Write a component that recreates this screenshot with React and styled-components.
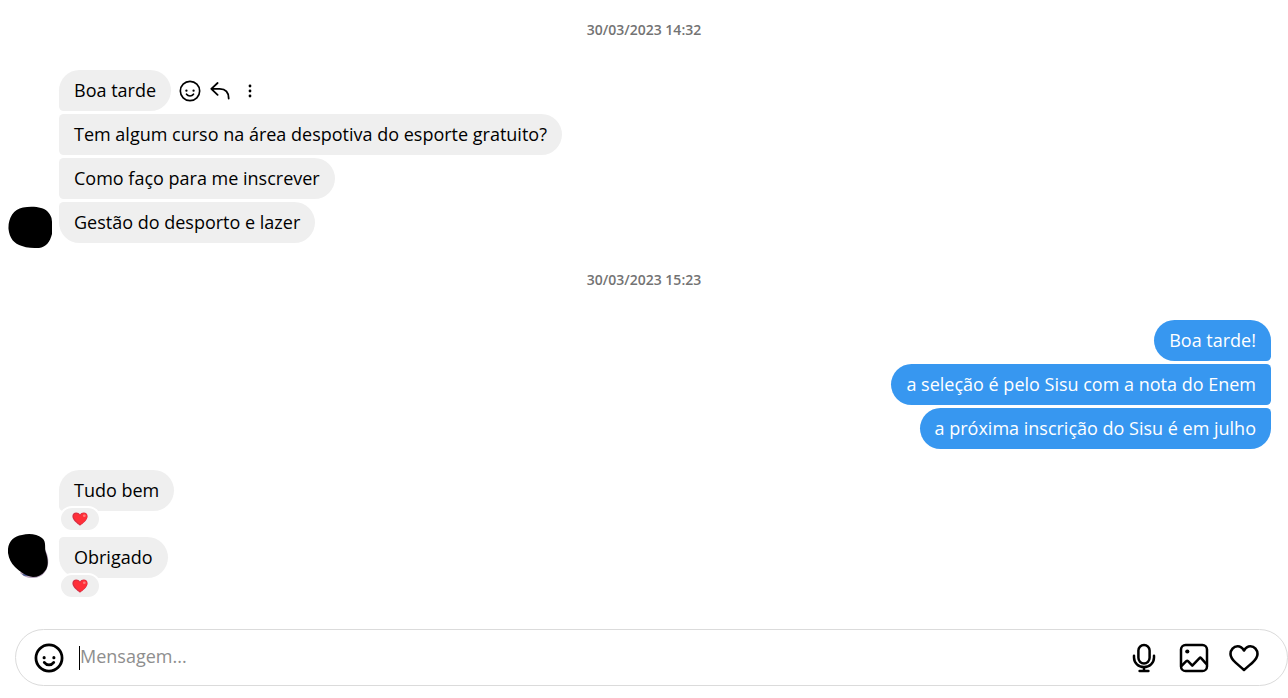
import React from "react";
import styled, { createGlobalStyle } from "styled-components";

const GlobalStyle = createGlobalStyle`
  *, *::before, *::after { box-sizing: border-box; }
  body {
    margin: 0;
    background: #fff;
    color: #000;
    font-family: "Segoe UI", "Open Sans", "Noto Sans", sans-serif;
  }
`;

const Page = styled.main`
  display: flex;
  flex-direction: column;
  min-height: 100vh;
`;

const Timestamp = styled.time`
  padding: 20px 0 30px;
  text-align: center;
  font-size: 14px;
  font-weight: 600;
  line-height: 20px;
  color: #737373;
`;

const Group = styled.section`
  display: flex;
  align-items: flex-end;
  justify-content: ${(p) => (p.$own ? "flex-end" : "flex-start")};
  padding: 0 17px ${(p) => p.$after}px 8px;
`;

const Avatar = styled.svg`
  flex: none;
  width: 44px;
  height: 46px;
  margin: 0 7px ${(p) => p.$lift}px 0;
`;

const Stack = styled.div`
  display: flex;
  flex-direction: column;
  align-items: ${(p) => (p.$own ? "flex-end" : "flex-start")};
  gap: 3px;
  padding-bottom: ${(p) => p.$below || 0}px;
`;

const Row = styled.div`
  display: flex;
  align-items: center;
`;

const corners = (own, first, last) => {
  const top = first ? 22 : 5;
  const bottom = last ? 22 : 5;
  return own ? `22px ${top}px ${bottom}px 22px` : `${top}px 22px 22px ${bottom}px`;
};

const Bubble = styled.p`
  margin: 0;
  padding: 8px 15px;
  font-size: 18px;
  line-height: 25px;
  border-radius: ${(p) => corners(p.$own, p.$first, p.$last)};
  background: ${(p) => (p.$own ? "#3797f0" : "#efefef")};
  color: ${(p) => (p.$own ? "#fff" : "#000")};
`;

const Reaction = styled.div`
  display: flex;
  align-items: center;
  justify-content: center;
  width: 42px;
  height: 26px;
  margin-top: -8px;
  margin-bottom: 2px;
  border: 2px solid #fff;
  border-radius: 14px;
  background: #efefef;
`;

const Actions = styled.div`
  display: flex;
  gap: 8px;
  margin-left: 8px;
`;

const IconButton = styled.button`
  display: flex;
  align-items: center;
  justify-content: center;
  padding: 0;
  border: 0;
  background: none;
  color: #000;
  width: ${(p) => p.$size}px;
  height: ${(p) => p.$size}px;
  cursor: pointer;
`;

const Composer = styled.form`
  display: flex;
  align-items: center;
  height: 57px;
  margin: auto 0 12px 15px;
  padding: 0 28px 0 18px;
  border: 1px solid #dbdbdb;
  border-radius: 29px;
`;

const Caret = styled.span`
  flex: none;
  width: 1px;
  height: 24px;
  margin-left: 15px;
  background: #000;
`;

const MessageInput = styled.input`
  flex: 1;
  min-width: 0;
  height: 40px;
  padding: 0 0 3px;
  border: 0;
  outline: 0;
  background: none;
  font: inherit;
  font-size: 18px;
  caret-color: transparent;
  &::placeholder { color: #8e8e8e; opacity: 1; }
`;

const Tools = styled.div`
  display: flex;
  gap: 20px;
`;

function Smiley({ size, stroke = 2 }) {
  return (
    <svg width={size} height={size} viewBox="0 0 24 24" fill="none" aria-hidden="true">
      <circle cx="12" cy="12" r={11 - stroke / 4} stroke="currentColor" strokeWidth={stroke} />
      <circle cx="8.1" cy="11.7" r="1.25" fill="currentColor" />
      <circle cx="15.9" cy="11.7" r="1.25" fill="currentColor" />
      <path d="M8.2 15.5c1.9 2.6 5.7 2.6 7.6 0" stroke="currentColor" strokeWidth={stroke} strokeLinecap="round" />
    </svg>
  );
}

function Reply() {
  return (
    <svg width="20" height="18" viewBox="0 0 20 18" fill="none" stroke="currentColor" strokeWidth="1.8" strokeLinecap="round" strokeLinejoin="round" aria-hidden="true">
      <path d="M7.6 1 1.3 6.8l6.3 6.1M1.3 6.8h8.4c5.5 0 9 3.4 9 9.7" />
    </svg>
  );
}

function More() {
  return (
    <svg width="4" height="14" viewBox="0 0 4 14" fill="currentColor" aria-hidden="true">
      <circle cx="2" cy="2" r="1.4" />
      <circle cx="2" cy="7" r="1.4" />
      <circle cx="2" cy="12" r="1.4" />
    </svg>
  );
}

function Mic() {
  return (
    <svg width="24" height="30" viewBox="0 0 24 30" fill="none" stroke="currentColor" strokeWidth="2.5" strokeLinecap="round" aria-hidden="true">
      <rect x="6.4" y="2" width="11.2" height="18.4" rx="5.6" />
      <path d="M2 12.8v1.7a10 9.6 0 0 0 20 0v-1.7M12 24v4M7.6 28h8.8" />
    </svg>
  );
}

function Picture() {
  return (
    <svg width="30" height="30" viewBox="0 0 30 30" fill="none" stroke="currentColor" strokeWidth="2.5" strokeLinejoin="round" aria-hidden="true">
      <rect x="2" y="2" width="26" height="26" rx="4.6" />
      <circle cx="8.3" cy="8.5" r="2.1" fill="currentColor" stroke="none" />
      <path d="m2.4 23 4.9-4.8c.6-.5 1.2-.5 1.7 0l4.3 4.5 7.2-7.6c.5-.5 1.1-.5 1.6 0l5.4 6" />
    </svg>
  );
}

function Heart() {
  return (
    <svg width="30" height="28" viewBox="0 0 30 28" fill="none" stroke="currentColor" strokeWidth="2.6" strokeLinejoin="round" aria-hidden="true">
      <path d="M21.4 2.3c-2.9 0-4.8 1.5-6.4 4.2-1.6-2.7-3.5-4.2-6.4-4.2C4.5 2.3 1.5 5.7 1.5 10c0 4.1 2.8 6.6 5.4 8.9 2.5 2.2 5.2 4.5 8.1 7.1 2.9-2.6 5.6-4.9 8.1-7.1 2.6-2.3 5.4-4.8 5.4-8.9 0-4.3-3-7.7-7.1-7.7Z" />
    </svg>
  );
}

function RedHeart() {
  return (
    <svg width="16" height="14" viewBox="0 0 16 14" role="img" aria-label="Amei">
      <path fill="#d62f45" d="M8 13.7C5.3 11.8.4 8.2.4 4.3.4 1.9 2 .4 4.2.4 6 .4 7.3 1.3 8 2.5 8.7 1.3 10 .4 11.8.4c2.2 0 3.8 1.5 3.8 3.9 0 3.9-4.9 7.5-7.6 9.4Z" />
      <path fill="#ff2f38" d="M8.6 12.5C6 10.7 1.7 7.7 1.7 4.3c0-1.7 1-2.9 2.7-2.9 1.7 0 2.9 1 3.7 2.7.8-1.7 2-3 3.7-3 2 0 3.3 1.3 3.3 3.2 0 3.4-3.9 6.5-6.5 8.2Z" />
      <ellipse cx="12.3" cy="3.7" rx="1.4" ry="1.2" fill="#ff7b79" />
    </svg>
  );
}

export default function App() {
  return (
    <Page>
      <GlobalStyle />
      <Timestamp>30/03/2023 14:32</Timestamp>
      <Group $after={2}>
        <Avatar $lift={0} viewBox="0 0 44 46" aria-hidden="true">
          <path d="M.5 27C0 17 5 7 15 5.5c6-1 13-1 18 .5 5 1 9 5 10.5 10 1 6 1 12 .5 16-2 8-6 13-13 14-6 0-12 0-17-2C6 42 1.5 36 .5 27Z" />
        </Avatar>
        <Stack $below={5}>
          <Row>
            <Bubble $first>Boa tarde</Bubble>
            <Actions>
              <IconButton $size={22} type="button" aria-label="Reagir"><Smiley size={22} stroke={1.8} /></IconButton>
              <IconButton $size={22} type="button" aria-label="Responder"><Reply /></IconButton>
              <IconButton $size={22} type="button" aria-label="Mais opções"><More /></IconButton>
            </Actions>
          </Row>
          <Bubble>Tem algum curso na área despotiva do esporte gratuito?</Bubble>
          <Bubble>Como faço para me inscrever</Bubble>
          <Bubble $last>Gestão do desporto e lazer</Bubble>
        </Stack>
      </Group>

      <Timestamp>30/03/2023 15:23</Timestamp>
      <Group $own $after={21}>
        <Stack $own>
          <Bubble $own $first>Boa tarde!</Bubble>
          <Bubble $own>a seleção é pelo Sisu com a nota do Enem</Bubble>
          <Bubble $own $last>a próxima inscrição do Sisu é em julho</Bubble>
        </Stack>
      </Group>

      <Group $after={20}>
        <Avatar $lift={22} viewBox="0 0 44 46" aria-hidden="true">
          <path fill="#b6a3bd" d="M36 15c5 7 6 17 1 24-3 4-7 6-13 6-5 0-9-2-12-5Z" />
          <path fill="#56649b" d="M14 41h15v2H16Z" />
          <path d="M0 20C-1 10 5 3 14 2c7-2 15-1 20 3 5 4 2 10 4 15 2 6 3 13-1 18-3 4-7 6-12 6-7-1-13-5-18-10-4-4-6-8-7-14Z" />
        </Avatar>
        <Stack>
          <Bubble $first>Tudo bem</Bubble>
          <Reaction><RedHeart /></Reaction>
          <Bubble $last>Obrigado</Bubble>
          <Reaction><RedHeart /></Reaction>
        </Stack>
      </Group>

      <Composer onSubmit={(e) => e.preventDefault()}>
        <IconButton $size={30} type="button" aria-label="Escolher emoji"><Smiley size={30} stroke={2.2} /></IconButton>
        <Caret />
        <MessageInput type="text" placeholder="Mensagem..." aria-label="Mensagem" />
        <Tools>
          <IconButton $size={30} type="button" aria-label="Gravar áudio"><Mic /></IconButton>
          <IconButton $size={30} type="button" aria-label="Enviar foto"><Picture /></IconButton>
          <IconButton $size={30} type="button" aria-label="Curtir"><Heart /></IconButton>
        </Tools>
      </Composer>
    </Page>
  );
}
